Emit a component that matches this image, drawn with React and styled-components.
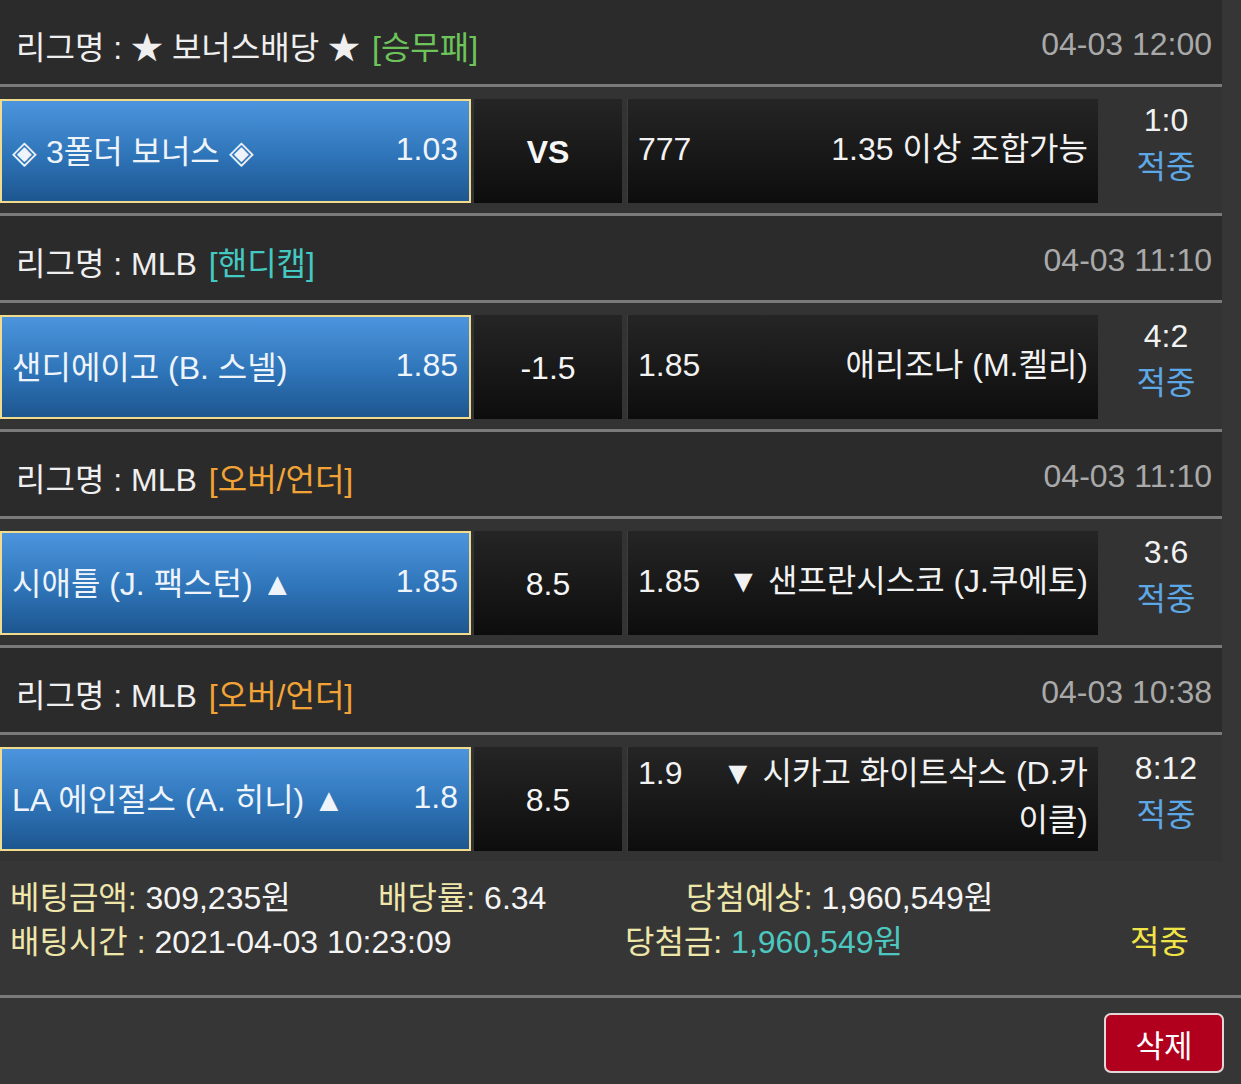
import React from "react";
import styled, { createGlobalStyle } from "styled-components";

const GlobalStyle = createGlobalStyle`
  body {
    margin: 0;
    background: #363636;
    font-family: "Liberation Sans", "Noto Sans CJK KR", sans-serif;
  }
`;

const bets = [
  {
    league: "★ 보너스배당 ★",
    type: "[승무패]",
    typeColor: "#6cc45a",
    date: "04-03 12:00",
    home: "◈ 3폴더 보너스 ◈",
    homeOdds: "1.03",
    mid: "VS",
    bold: true,
    awayOdds: "777",
    away: "1.35 이상 조합가능",
    score: "1:0",
  },
  {
    league: "MLB",
    type: "[핸디캡]",
    typeColor: "#44c9c2",
    date: "04-03 11:10",
    home: "샌디에이고 (B. 스넬)",
    homeOdds: "1.85",
    mid: "-1.5",
    awayOdds: "1.85",
    away: "애리조나 (M.켈리)",
    score: "4:2",
  },
  {
    league: "MLB",
    type: "[오버/언더]",
    typeColor: "#f2a336",
    date: "04-03 11:10",
    home: "시애틀 (J. 팩스턴) ▲",
    homeOdds: "1.85",
    mid: "8.5",
    awayOdds: "1.85",
    away: "▼ 샌프란시스코 (J.쿠에토)",
    score: "3:6",
  },
  {
    league: "MLB",
    type: "[오버/언더]",
    typeColor: "#f2a336",
    date: "04-03 10:38",
    home: "LA 에인절스 (A. 히니) ▲",
    homeOdds: "1.8",
    mid: "8.5",
    awayOdds: "1.9",
    away: "▼ 시카고 화이트삭스 (D.카이클)",
    score: "8:12",
  },
];

const Page = styled.div`
  width: 1241px;
  background: #363636;
  color: #f2f2f2;
  font-size: 32px;
`;

const Table = styled.div`
  width: 1222px;
`;

const Header = styled.div`
  height: 84px;
  box-sizing: border-box;
  padding: 5px 10px 0 16px;
  background: #2b2b2b;
  display: flex;
  align-items: center;
  justify-content: space-between;
`;

const League = styled.div`
  color: #efefef;
`;

const Type = styled.span`
  color: ${(p) => p.$color};
  margin-left: 12px;
`;

const DateText = styled.div`
  color: #a9a9a9;
`;

const Line = styled.div`
  height: 3px;
  background: #7a7a7a;
`;

const MatchRow = styled.div`
  display: flex;
  background: #333333;
  padding: 12px 0 10px;
`;

const HomeCell = styled.div`
  width: 471px;
  height: 104px;
  box-sizing: border-box;
  border: 2px solid #f1dc8e;
  background: linear-gradient(#4c95de, #2e74b8 55%, #1d5690);
  display: flex;
  align-items: center;
  justify-content: space-between;
  padding: 0 11px 4px 10px;
  color: #eef4fa;
`;

const MidCell = styled.div`
  width: 148px;
  height: 104px;
  margin-left: 3px;
  background: linear-gradient(#252525, #0d0d0d);
  display: flex;
  align-items: center;
  justify-content: center;
  padding-top: 2px;
  box-sizing: border-box;
  font-weight: ${(p) => (p.$bold ? 700 : 400)};
  color: #f6f6f6;
`;

const AwayCell = styled.div`
  width: 471px;
  height: 104px;
  margin-left: 5px;
  box-sizing: border-box;
  padding: 0 10px 4px;
  background: linear-gradient(#252525, #0d0d0d);
  border-left: 1px solid #3d3d3d;
  display: flex;
  align-items: center;
`;

const Split = styled.div`
  flex: 1;
  display: flex;
  align-items: flex-start;
  justify-content: space-between;
  gap: 16px;
  line-height: 47px;
`;

const AwayName = styled.div`
  max-width: 370px;
  text-align: right;
`;

const ScoreCell = styled.div`
  flex: 1;
  margin: -12px 0 -10px;
  display: flex;
  flex-direction: column;
  align-items: center;
  justify-content: center;
  line-height: 47px;
  padding: 0 0 12px 12px;
`;

const Hit = styled.div`
  color: ${(p) => p.$color || "#5ea7e6"};
`;

const Summary = styled.div`
  padding: 15px 0 31px 10px;
  line-height: 44px;
`;

const SumRow = styled.div`
  display: grid;
  grid-template-columns: ${(p) => p.$cols};
`;

const Label = styled.span`
  color: #efe6aa;
`;

const Value = styled.span`
  color: ${(p) => p.$color || "#f4f4f4"};
`;

const Footer = styled.div`
  display: flex;
  justify-content: flex-end;
  padding: 15px 17px 12px;
`;

const DeleteButton = styled.button`
  width: 120px;
  height: 60px;
  border: 2px solid #e2d6d6;
  border-radius: 7px;
  background: #b1001d;
  color: #fff;
  font-family: inherit;
  font-size: 31px;
  padding: 0;
`;

const App = () => {
  return (
    <Page>
      <GlobalStyle />
      <Table>
        {bets.map((b, i) => (
          <React.Fragment key={i}>
            {i > 0 && <Line />}
            <Header>
              <League>
                리그명 : {b.league}
                <Type $color={b.typeColor}>{b.type}</Type>
              </League>
              <DateText>{b.date}</DateText>
            </Header>
            <Line />
            <MatchRow>
              <HomeCell>
                <span>{b.home}</span>
                <span>{b.homeOdds}</span>
              </HomeCell>
              <MidCell $bold={b.bold}>{b.mid}</MidCell>
              <AwayCell>
                <Split>
                  <span>{b.awayOdds}</span>
                  <AwayName>{b.away}</AwayName>
                </Split>
              </AwayCell>
              <ScoreCell>
                <div>{b.score}</div>
                <Hit>적중</Hit>
              </ScoreCell>
            </MatchRow>
          </React.Fragment>
        ))}
      </Table>
      <Summary>
        <SumRow $cols="368px 308px auto">
          <div>
            <Label>베팅금액:</Label> <Value>309,235원</Value>
          </div>
          <div>
            <Label>배당률:</Label> <Value>6.34</Value>
          </div>
          <div>
            <Label>당첨예상:</Label> <Value>1,960,549원</Value>
          </div>
        </SumRow>
        <SumRow $cols="615px 505px auto">
          <div>
            <Label>배팅시간 :</Label> <Value>2021-04-03 10:23:09</Value>
          </div>
          <div>
            <Label>당첨금:</Label> <Value $color="#4dc8c0">1,960,549원</Value>
          </div>
          <div>
            <Hit $color="#f1e448">적중</Hit>
          </div>
        </SumRow>
      </Summary>
      <Line />
      <Footer>
        <DeleteButton>삭제</DeleteButton>
      </Footer>
    </Page>
  );
};

export default App;
